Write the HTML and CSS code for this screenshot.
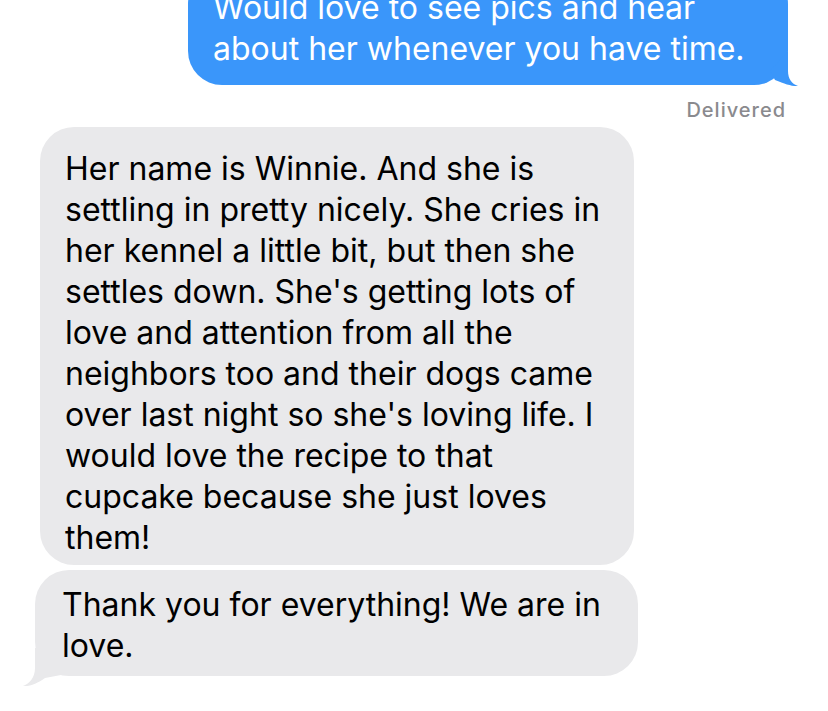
FILE: index.html
```html
<!DOCTYPE html>
<html>
<head>
<meta charset="utf-8">
<link rel="stylesheet" href="styles.css">
</head>
<body>
<div class="thread">
  <div class="row row-out">
    <div class="bubble bubble-out">
      <p class="msg">Would love to see pics and hear<br>about her whenever you have time.</p>
      <svg class="tail tail-out" width="40" height="50" viewBox="0 0 40 50"><path d="M28 10 L28 30 C28 38 32 43 38 45 C32 45.5 25 43 15 39 L10 30 Z" fill="#3a96fa"/></svg>
    </div>
  </div>
  <div class="status">Delivered</div>
  <div class="row row-in">
    <div class="bubble bubble-in bubble-first">
      <p class="msg">Her name is Winnie. And she is<br>settling in pretty nicely. She cries in<br>her kennel a little bit, but then she<br>settles down. She's getting lots of<br>love and attention from all the<br>neighbors too and their dogs came<br>over last night so she's loving life. I<br>would love the recipe to that<br>cupcake because she just loves<br>them!</p>
    </div>
  </div>
  <div class="row row-in">
    <div class="bubble bubble-in bubble-last">
      <p class="msg">Thank you for everything! We are in<br>love.</p>
      <svg class="tail tail-in" width="40" height="50" viewBox="0 0 40 50"><path d="M14 10 L14 30 C14 40 8 46 2 48 C10 48.5 17 45 24 40 L40 37 L40 10 Z" fill="#e9e9eb"/></svg>
    </div>
  </div>
</div>
</body>
</html>
```

FILE: styles.css
```css
html, body {
  margin: 0;
  padding: 0;
  background: #ffffff;
}
body {
  font-family: "Inter", "Liberation Sans", sans-serif;
  width: 828px;
  height: 711px;
  overflow: hidden;
}
.thread {
  display: flex;
  flex-direction: column;
}
.row {
  display: flex;
}
.row-out {
  justify-content: flex-end;
  padding-right: 40px;
  margin-top: -30px;
}
.row-in {
  justify-content: flex-start;
}
.bubble {
  position: relative;
  border-radius: 34px;
  box-sizing: border-box;
}
.msg {
  position: relative;
  z-index: 1;
  margin: 0;
  font-size: 32px;
  line-height: 41px;
  letter-spacing: 0;
  white-space: nowrap;
}
.bubble-out {
  background: #3a96fa;
  color: #ffffff;
  width: 600px;
  padding: 17px 25px 16px 25px;
}
.bubble-in {
  background: #e9e9eb;
  color: #000000;
}
.bubble-first {
  margin-left: 40px;
  width: 594px;
  padding: 21px 25px 7px 25px;
  margin-top: 5px;
}
.bubble-last {
  margin-left: 35px;
  width: 603px;
  padding: 14px 27px 10px 27px;
  margin-top: 5px;
}
.tail {
  position: absolute;
}
.tail-out {
  right: -12px;
  bottom: -6px;
}
.tail-in {
  left: -14px;
  bottom: -12px;
}
.status {
  align-self: flex-end;
  margin-right: 42px;
  margin-top: 13px;
  font-size: 20px;
  line-height: 24px;
  font-weight: 500;
  letter-spacing: 1px;
  color: #8a8a8e;
}
```
